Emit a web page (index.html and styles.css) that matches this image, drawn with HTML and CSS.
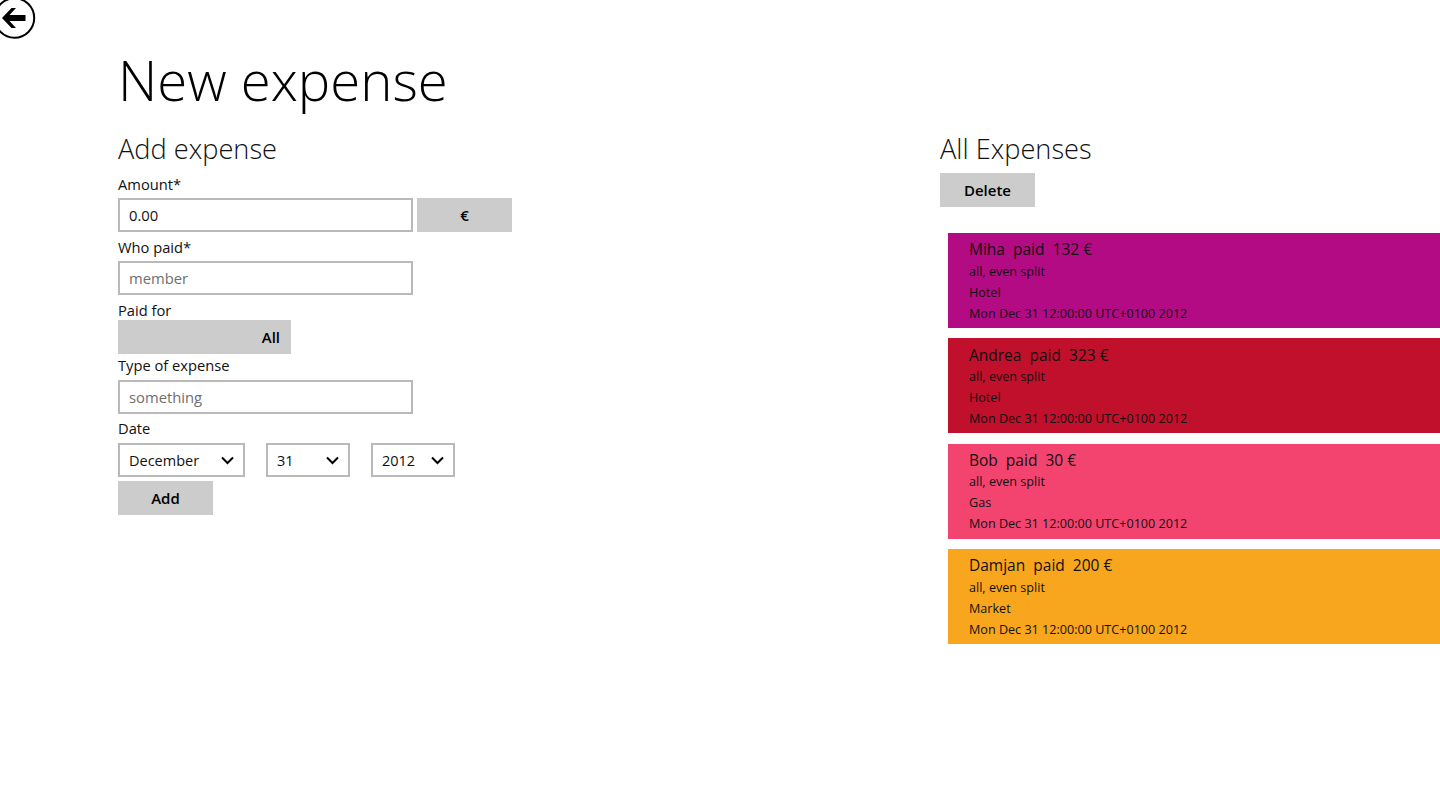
FILE: index.html
```html
<!DOCTYPE html>
<html lang="en">
<head>
<meta charset="utf-8">
<title>New expense</title>
<link rel="stylesheet" href="styles.css">
</head>
<body>
<div class="page">
  <svg class="back" width="36" height="40" viewBox="0 0 36 40" aria-label="Back">
    <circle cx="14.500" cy="18" r="19.700" fill="none" stroke="#000" stroke-width="2"/>
    <path d="M2 18 L11.500 8 L16 8 L9.500 15 L25.500 15 L25.500 21 L9.500 21 L16 28 L11.500 28 Z" fill="#000"/>
  </svg>
  <header class="head"><h1>New expense</h1></header>
  <main class="columns">
    <section class="form">
      <h2>Add expense</h2>
      <label class="lbl lbl-first">Amount*</label>
      <div class="row">
        <div class="input val">0.00</div>
        <button class="btn btn-cur">€</button>
      </div>
      <label class="lbl">Who paid*</label>
      <div class="input ph">member</div>
      <label class="lbl lbl-paid">Paid for</label>
      <button class="btn btn-all">All</button>
      <label class="lbl lbl-tight">Type of expense</label>
      <div class="input ph">something</div>
      <label class="lbl lbl-date">Date</label>
      <div class="row dates">
        <div class="select s-month"><span>December</span><svg class="chev" width="13" height="9" viewBox="0 0 13 9"><path d="M1 1.500 L6.500 7 L12 1.500" fill="none" stroke="#000" stroke-width="2"/></svg></div>
        <div class="select s-day"><span>31</span><svg class="chev" width="13" height="9" viewBox="0 0 13 9"><path d="M1 1.500 L6.500 7 L12 1.500" fill="none" stroke="#000" stroke-width="2"/></svg></div>
        <div class="select s-year"><span>2012</span><svg class="chev" width="13" height="9" viewBox="0 0 13 9"><path d="M1 1.500 L6.500 7 L12 1.500" fill="none" stroke="#000" stroke-width="2"/></svg></div>
      </div>
      <button class="btn btn-add">Add</button>
    </section>
    <section class="list">
      <h2>All Expenses</h2>
      <button class="btn btn-del">Delete</button>
      <div class="items">
        <article class="item c1"><div class="t">Miha&nbsp; paid&nbsp; 132 €</div><div class="s">all, even split</div><div class="s">Hotel</div><div class="s">Mon Dec 31 12:00:00 UTC+0100 2012</div></article>
        <article class="item c2"><div class="t">Andrea&nbsp; paid&nbsp; 323 €</div><div class="s">all, even split</div><div class="s">Hotel</div><div class="s">Mon Dec 31 12:00:00 UTC+0100 2012</div></article>
        <article class="item c3"><div class="t">Bob&nbsp; paid&nbsp; 30 €</div><div class="s">all, even split</div><div class="s">Gas</div><div class="s">Mon Dec 31 12:00:00 UTC+0100 2012</div></article>
        <article class="item c4"><div class="t">Damjan&nbsp; paid&nbsp; 200 €</div><div class="s">all, even split</div><div class="s">Market</div><div class="s">Mon Dec 31 12:00:00 UTC+0100 2012</div></article>
      </div>
    </section>
  </main>
</div>
</body>
</html>
```
FILE: styles.css
```css
* { box-sizing: border-box; }
html, body { margin: 0; padding: 0; }
body { background: #fff; color: #000; font-family: "Open Sans", "Noto Sans", sans-serif; width: 1440px; height: 810px; overflow: hidden; }
.page { position: relative; height: 810px; padding-left: 118px; }
.back { position: absolute; left: 0; top: 0; }
.head { height: 132px; padding-top: 44px; }
h1 { margin: 0; font-weight: 300; font-size: 54.500px; line-height: 72px; color: #000; }
h2 { margin: 0; font-weight: 300; font-size: 27.200px; line-height: 34px; color: #111; }
.columns { display: grid; grid-template-columns: 822px 500px; }
.lbl { display: block; font-size: 14.700px; line-height: 20px; height: 20px; color: #111; }
.form .lbl { margin-top: 5px; margin-bottom: 4px; }
.form .lbl-first { margin-top: 8px; margin-bottom: 4px; }
.form .lbl-paid { margin-bottom: 0; }
.form .lbl-tight { margin-top: 1px; margin-bottom: 5px; }
.form .lbl-date { margin-top: 4px; margin-bottom: 5px; }
.row { display: flex; }
.input { width: 295px; height: 34px; border: 2px solid #b9b9b9; padding-left: 9px; font-size: 14.800px; line-height: 30px; background: #fff; color: #111; }
.ph { color: #6f6f6f; }
.btn { display: block; border: 0; background: #ccc; height: 34px; width: 95px; padding: 0; font-family: inherit; font-weight: 600; font-size: 15px; color: #000; text-align: center; }
.btn-cur { margin-left: 4px; }
.btn-all { width: 173px; text-align: right; padding-right: 11px; }
.select { height: 34px; border: 2px solid #b9b9b9; display: flex; align-items: center; justify-content: space-between; padding: 0 9px; font-size: 14.500px; color: #111; }
.s-month { width: 127px; }
.s-day { width: 84px; margin-left: 21px; }
.s-year { width: 84px; margin-left: 21px; }
.chev { flex: none; }
.btn-add { margin-top: 4px; }
.btn-del { margin-top: 7px; }
.items { margin: 26px 0 0 8px; display: flex; flex-direction: column; gap: 10.330px; }
.item { height: 95px; padding: 6.300px 0 0 21px; color: #111; }
.t { font-size: 15.500px; line-height: 21px; height: 21.300px; }
.s { font-size: 12.600px; line-height: 21px; height: 21px; }
.c1 { background: #b30b84; }
.c2 { background: #c0102b; }
.c3 { background: #f34470; }
.c4 { background: #f9a61f; }
```
